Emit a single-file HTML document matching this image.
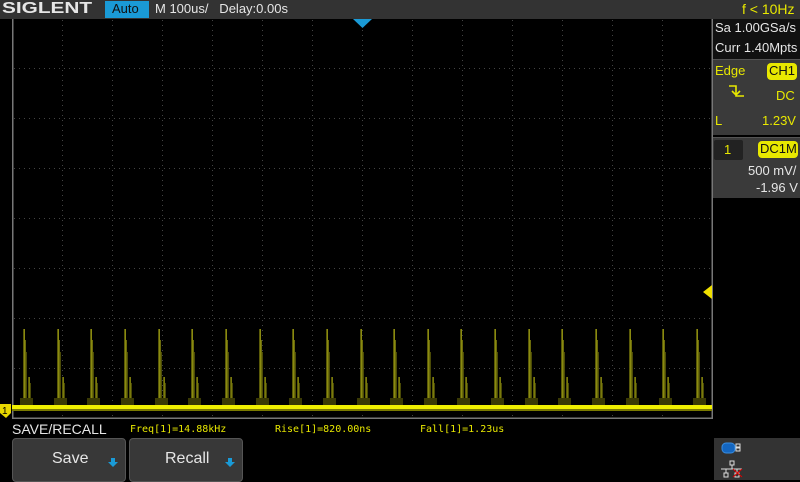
<!DOCTYPE html>
<html><head><meta charset="utf-8"><style>
*{margin:0;padding:0;box-sizing:border-box}
body{width:800px;height:480px;background:#000;overflow:hidden;position:relative;font-family:"Liberation Sans",sans-serif}
.abs{position:absolute}
.top{left:0;top:0;width:800px;height:19px;background:#333}
.t{position:absolute;white-space:nowrap}
.y{color:#e8e800}
.w{color:#e6e6e6}
.mono{font-family:"DejaVu Sans Mono","Liberation Mono",monospace}
.btn{position:absolute;top:438px;height:44px;background:#383838;border:1px solid #555;border-radius:4px;color:#e6e6e6;font-size:16px}
</style></head><body>
<div class="abs top"></div>
<div class="t" style="left:2px;top:0px;font-size:16px;line-height:18px;font-weight:900;color:#e6e6e6;transform:scaleX(1.3);transform-origin:left">SIGLENT</div>
<div class="abs" style="left:105px;top:1px;width:44px;height:17px;background:#1a9ad6"></div>
<div class="t" style="left:112px;top:1px;font-size:13px;color:#111">Auto</div>
<div class="t w" style="left:155px;top:1px;font-size:13px">M 100us/&nbsp;&nbsp; Delay:0.00s</div>
<div class="t y" style="left:742px;top:1px;font-size:14px">f &lt; 10Hz</div>

<svg class="abs" style="left:0;top:0" width="800" height="480">
<defs>
<pattern id="vd" width="1" height="5" patternUnits="userSpaceOnUse"><rect width="1" height="1" fill="#444"/></pattern>
</defs>
<g id="grid"></g>
<rect x="12" y="19" width="1.5" height="400" fill="#777"/>
<rect x="12" y="417.5" width="701" height="1.5" fill="#777"/>
<rect x="711.5" y="19" width="1.5" height="400" fill="#777"/>
<g id="sig"></g>
<rect x="12" y="405" width="700" height="4" fill="#f0f000"/>
<rect x="12" y="409" width="700" height="2" fill="#7a7a00"/>
<polygon points="353,19 372,19 362.5,28" fill="#1a9ad6"/>
<polygon points="703,292 712,285 712,299" fill="#f0e000"/>
<polygon points="0,404 11,404 11,413 6,418 0,413" fill="#e8d800"/>
<text x="2" y="414" font-size="10" fill="#000" font-family="Liberation Sans">1</text>
</svg>

<div class="abs" style="left:713px;top:19px;width:87px;height:40px;background:#111"></div>
<div class="t w" style="left:715px;top:20px;font-size:13px">Sa 1.00GSa/s</div>
<div class="t w" style="left:715px;top:40px;font-size:13px">Curr 1.40Mpts</div>
<div class="abs" style="left:713px;top:59px;width:87px;height:76px;background:#3a3a3a;border-top:1px solid #555"></div>
<div class="t y" style="left:715px;top:63px;font-size:13px">Edge</div>
<div class="abs" style="left:767px;top:63px;width:30px;height:17px;background:#e8e800;border-radius:4px"></div>
<div class="t" style="left:769px;top:63px;font-size:13px;color:#111">CH1</div>
<svg class="abs" style="left:728px;top:84px" width="20" height="16"><path d="M1 2H8V12H16M4 7L8 11L12 7" stroke="#e8e800" stroke-width="1.6" fill="none"/></svg>
<div class="t y" style="left:776px;top:88px;font-size:13px">DC</div>
<div class="t y" style="left:715px;top:113px;font-size:13px">L</div>
<div class="t y" style="left:762px;top:113px;font-size:13px">1.23V</div>
<div class="abs" style="left:713px;top:137px;width:87px;height:61px;background:#3a3a3a;border-top:1px solid #555"></div>
<div class="abs" style="left:714px;top:140px;width:29px;height:20px;background:#222;border-radius:2px"></div>
<div class="t y" style="left:724px;top:142px;font-size:13px">1</div>
<div class="abs" style="left:758px;top:141px;width:40px;height:17px;background:#e8e800;border-radius:4px"></div>
<div class="t" style="left:760px;top:141px;font-size:13px;color:#111">DC1M</div>
<div class="t w" style="left:748px;top:163px;font-size:13px">500 mV/</div>
<div class="t w" style="left:756px;top:180px;font-size:13px">-1.96 V</div>

<div class="t w" style="left:12px;top:421px;font-size:14px">SAVE/RECALL</div>
<div class="t y mono" style="left:130px;top:424px;font-size:10px">Freq[1]=14.88kHz</div>
<div class="t y mono" style="left:275px;top:424px;font-size:10px">Rise[1]=820.00ns</div>
<div class="t y mono" style="left:420px;top:424px;font-size:10px">Fall[1]=1.23us</div>
<div class="btn" style="left:12px;width:114px"><span style="position:absolute;left:39px;top:11px">Save</span></div>
<div class="btn" style="left:129px;width:114px"><span style="position:absolute;left:35px;top:11px">Recall</span></div>
<svg class="abs" style="left:108px;top:458px" width="10" height="10"><path d="M3 0H7V4H10L5 9L0 4H3Z" fill="#1a9ad6"/></svg>
<svg class="abs" style="left:225px;top:458px" width="10" height="10"><path d="M3 0H7V4H10L5 9L0 4H3Z" fill="#1a9ad6"/></svg>
<div class="abs" style="left:714px;top:438px;width:86px;height:42px;background:#333"></div>
<svg class="abs" style="left:720px;top:441px" width="30" height="38">
<rect x="2" y="2" width="13" height="10" rx="4" fill="#1466c0" stroke="#3a8ee0"/>
<rect x="16" y="3" width="4" height="3" fill="none" stroke="#ddd"/><rect x="16" y="7" width="4" height="3" fill="none" stroke="#ddd"/>
<rect x="10" y="20" width="4" height="4" fill="none" stroke="#ddd"/>
<path d="M12 24V28M1 28H22M6 28V32M17 28V32" stroke="#ddd"/>
<rect x="4" y="32" width="4" height="4" fill="none" stroke="#ddd"/><rect x="15" y="32" width="4" height="4" fill="none" stroke="#ddd"/>
<path d="M13 28L22 36M22 28L13 36" stroke="#d00" stroke-width="1"/>
</svg>

<script>
var g=document.getElementById('grid'),s='';
for(var x=62;x<712;x+=50){s+='<rect x="'+x+'" y="19" width="1" height="398" fill="url(#vd)"/>';}
for(var y=68;y<418;y+=50){for(var x=14;x<712;x+=5)s+='<rect x="'+x+'" y="'+y+'" width="1" height="1" fill="#444"/>';}
g.innerHTML=s;
var sg=document.getElementById('sig'),p='';
for(var i=0;i<21;i++){var x=Math.round(25+i*33.65);
p+='<rect x="'+(x-2)+'" y="329" width="1" height="77" fill="#5a5a08"/>';
p+='<rect x="'+(x-1)+'" y="329" width="1" height="77" fill="#8a8a10"/>';
p+='<rect x="'+(x)+'" y="340" width="1" height="66" fill="#6a6a0a"/>';
p+='<rect x="'+(x+1)+'" y="352" width="1" height="54" fill="#4a4a06"/>';
p+='<rect x="'+(x+3)+'" y="377" width="1" height="29" fill="#5a5a08"/>';
p+='<rect x="'+(x+4)+'" y="377" width="1" height="29" fill="#7a7a0c"/>';
p+='<rect x="'+(x+5)+'" y="383" width="1" height="23" fill="#4a4a06"/>';
p+='<rect x="'+(x-5)+'" y="398" width="13" height="7" fill="#3a3a04"/>';}
sg.innerHTML=p;
</script>
</body></html>
